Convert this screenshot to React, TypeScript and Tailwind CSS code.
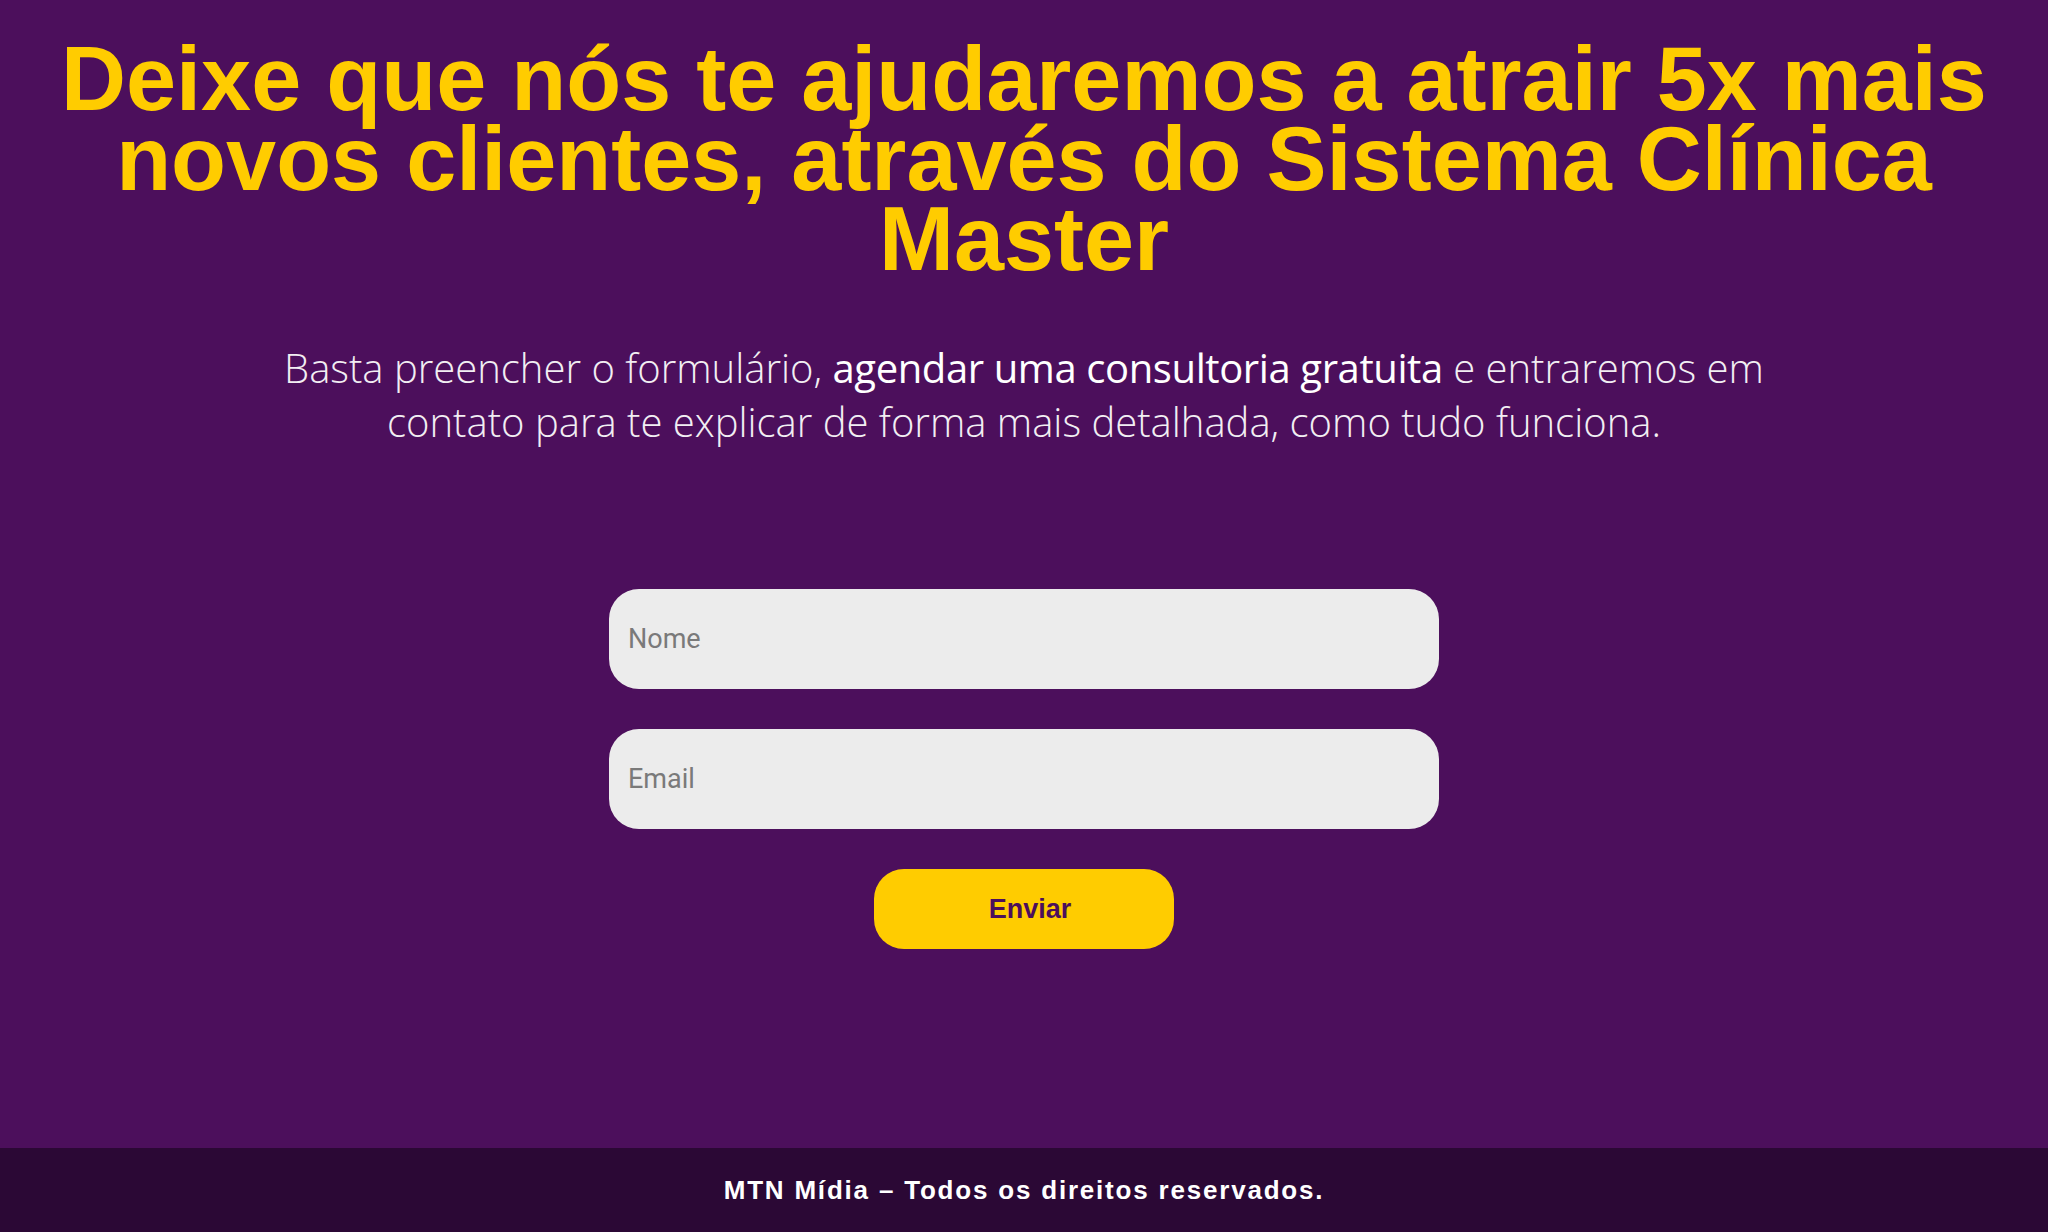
export default function App() {
  return (
    <div className="min-h-screen w-full flex flex-col bg-[#4c0f5c]">
      <main className="flex-1 flex flex-col items-center px-[40px] pt-[39px]">
        <h1 className="text-center text-[#ffcc00] font-bold text-[90px] leading-[80px] [font-family:'Liberation_Sans',Arial,sans-serif] max-w-[1960px]">
          Deixe que nós te ajudaremos a atrair 5x mais novos clientes, através do Sistema Clínica Master
        </h1>
        <p className="mt-[62px] max-w-[1560px] text-center text-[#f2eef3] font-light text-[40px] leading-[54px] [font-family:'Open_Sans',sans-serif]">
          Basta preencher o formulário,{" "}
          <span className="font-normal text-white tracking-[-0.4px]">agendar uma consultoria gratuita</span> e entraremos em
          contato para te explicar de forma mais detalhada, como tudo funciona.
        </p>
        <form className="mt-[140px] w-[830px] flex flex-col items-center gap-[40px]" onSubmit={(e) => e.preventDefault()}>
          <input
            type="text"
            placeholder="Nome"
            className="w-full h-[100px] rounded-[30px] bg-[#ececec] px-[19px] text-[27px] text-[#555] placeholder:text-[#7a7a7a] outline-none [font-family:Roboto,sans-serif]"
          />
          <input
            type="email"
            placeholder="Email"
            className="w-full h-[100px] rounded-[30px] bg-[#ececec] px-[19px] text-[27px] text-[#555] placeholder:text-[#7a7a7a] outline-none [font-family:Roboto,sans-serif]"
          />
          <button
            type="submit"
            className="w-[300px] h-[80px] rounded-[30px] bg-[#ffcc00] text-[#4c0f5c] font-bold text-[27px] pl-[12px] [font-family:'Liberation_Sans',Arial,sans-serif]"
          >
            Enviar
          </button>
        </form>
      </main>
      <footer className="h-[84px] bg-[#2b0835] flex items-center justify-center">
        <span className="text-white font-bold text-[26px] tracking-[1.8px] [font-family:'Liberation_Sans',Arial,sans-serif]">
          MTN Mídia – Todos os direitos reservados.
        </span>
      </footer>
    </div>
  );
}
